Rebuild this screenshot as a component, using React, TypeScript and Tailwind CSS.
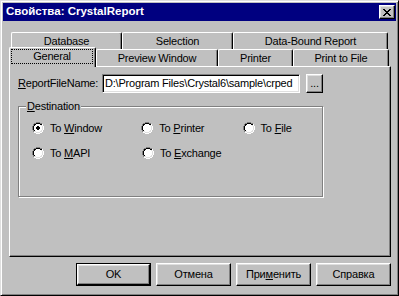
const radioOff = [
  "....gggg....",
  "..ggkkkkgg..",
  ".gkkwwwwkkw.",
  ".gkwwwwwwdw.",
  "gkwwwwwwwwdw",
  "gkwwwwwwwwdw",
  "gkwwwwwwwwdw",
  "gkwwwwwwwwdw",
  ".gkwwwwwwdw.",
  ".gddwwwwddw.",
  "..wwddddww..",
  "....wwww....",
];

const radioOn = [
  "....gggg....",
  "..ggkkkkgg..",
  ".gkkwwwwkkw.",
  ".gkwwwwwwdw.",
  "gkwwwbbwwwdw",
  "gkwwbbbbwwdw",
  "gkwwbbbbwwdw",
  "gkwwwbbwwwdw",
  ".gkwwwwwwdw.",
  ".gddwwwwddw.",
  "..wwddddww..",
  "....wwww....",
];

const closeX = [
  "bb....bb",
  ".bb..bb.",
  "..bbbb..",
  "...bb...",
  "..bbbb..",
  ".bb..bb.",
  "bb....bb",
];

const palette: Record<string, string> = {
  g: "#808080",
  k: "#000000",
  w: "#ffffff",
  d: "#dfdfdf",
  b: "#000000",
};

const Pixels = ({ rows }: { rows: string[] }) => (
  <svg width={rows[0].length} height={rows.length} shapeRendering="crispEdges" className="shrink-0 block">
    {rows.flatMap((r, y) =>
      r.split("").map((c, x) =>
        palette[c] ? <rect key={`${x}-${y}`} x={x} y={y} width={1} height={1} fill={palette[c]} /> : null
      )
    )}
  </svg>
);

const Tab = ({ label, width }: { label: string; width: string }) => (
  <div
    className={`${width} h-full flex items-center justify-center border-l border-t border-r border-l-white border-t-white border-r-black rounded-t-[2px] shadow-[inset_-1px_0_0_#808080]`}
  >
    {label}
  </div>
);

const Radio = ({ checked, children, width }: { checked?: boolean; children: React.ReactNode; width: string }) => (
  <div className={`${width} h-[12px] flex items-center gap-[6px] leading-[12px]`}>
    <Pixels rows={checked ? radioOn : radioOff} />
    <span className="whitespace-nowrap">{children}</span>
  </div>
);

const Button = ({ children, primary }: { children: React.ReactNode; primary?: boolean }) => (
  <div className={`w-[75px] h-[23px] ${primary ? "border border-black" : ""}`}>
    <div className="w-full h-full flex items-center justify-center border border-t-white border-l-white border-r-black border-b-black shadow-[inset_-1px_-1px_0_#808080,inset_1px_1px_0_#dfdfdf]">
      {children}
    </div>
  </div>
);

const App = () => {
  return (
    <div className="w-[399px] h-[296px] bg-[#c0c0c0] border border-t-[#dfdfdf] border-l-[#dfdfdf] border-r-black border-b-black p-[2px] shadow-[inset_1px_1px_0_#fff,inset_-1px_-1px_0_#808080] font-['Liberation_Sans',Arial,sans-serif] text-[11px] tracking-[-0.2px] text-black flex flex-col overflow-hidden">
      {/* title bar */}
      <div className="h-[18px] shrink-0 bg-[#000080] flex items-center justify-between pl-[3px] pr-[1px]">
        <span className="text-white font-bold text-[11.5px] tracking-normal leading-none">Свойства: CrystalReport</span>
        <div className="w-[16px] h-[14px] flex items-center justify-center border border-t-white border-l-white border-r-black border-b-black bg-[#c0c0c0] shadow-[inset_-1px_-1px_0_#808080,inset_1px_1px_0_#dfdfdf]">
          <Pixels rows={closeX} />
        </div>
      </div>

      {/* tabs */}
      <div className="mt-[11px] flex flex-col">
        <div className="ml-[8px] h-[17px] flex">
          <Tab label="Database" width="w-[111px]" />
          <Tab label="Selection" width="w-[111px]" />
          <Tab label="Data-Bound Report" width="w-[155px]" />
        </div>
        <div className="ml-[6px] h-[17px] flex items-end">
          <div className="relative z-10 w-[87px] h-[20px] -mb-px bg-[#c0c0c0] border-l border-t border-r border-l-white border-t-white border-r-black rounded-t-[2px] shadow-[inset_-1px_0_0_#808080] pl-[1px] pt-[1px] pr-[2px] pb-[3px]">
            <div className="w-full h-full border border-dotted border-black flex items-center justify-center">General</div>
          </div>
          <div className="h-full flex">
            <Tab label="Preview Window" width="w-[122px]" />
            <Tab label="Printer" width="w-[75px]" />
            <Tab label="Print to File" width="w-[96px]" />
          </div>
        </div>

        {/* panel */}
        <div className="ml-[6px] w-[382px] h-[191px] border border-t-white border-l-white border-r-black border-b-black shadow-[inset_-1px_-1px_0_#808080] pl-[8px] pt-[7px] flex flex-col">
          <div className="h-[19px] flex items-center">
            <span className="w-[84px] whitespace-nowrap">
              <span className="underline underline-offset-[1px]">R</span>eportFileName:
            </span>
            <div className="w-[198px] h-[19px] bg-white border border-t-[#808080] border-l-[#808080] border-r-white border-b-white shadow-[inset_1px_1px_0_#000,inset_-1px_-1px_0_#dfdfdf] pl-[2px] flex items-center overflow-hidden whitespace-nowrap">
              D:\Program Files\Crystal6\sample\crped
            </div>
            <div className="ml-[6px] w-[17px] h-[19px] flex items-center justify-center border border-t-white border-l-white border-r-black border-b-black shadow-[inset_-1px_-1px_0_#808080,inset_1px_1px_0_#dfdfdf] leading-none">
              ...
            </div>
          </div>

          {/* group box */}
          <div className="relative mt-[13px] w-[305px] h-[91px] border border-[#808080] shadow-[inset_1px_1px_0_#fff,1px_1px_0_#fff] pl-[13px] pt-[15px] flex flex-col gap-[13px]">
            <span className="absolute -top-[7px] left-[7px] px-[1px] bg-[#c0c0c0] leading-[13px]">
              <span className="underline underline-offset-[1px]">D</span>estination
            </span>
            <div className="flex">
              <Radio checked width="w-[110px]">
                To <span className="underline underline-offset-[1px]">W</span>indow
              </Radio>
              <Radio width="w-[102px]">
                To <span className="underline underline-offset-[1px]">P</span>rinter
              </Radio>
              <Radio width="w-[80px]">
                To <span className="underline underline-offset-[1px]">F</span>ile
              </Radio>
            </div>
            <div className="flex">
              <Radio width="w-[110px]">
                To <span className="underline underline-offset-[1px]">M</span>API
              </Radio>
              <Radio width="w-[102px]">
                To <span className="underline underline-offset-[1px]">E</span>xchange
              </Radio>
            </div>
          </div>
        </div>
      </div>

      {/* buttons */}
      <div className="mt-[6px] mr-[5px] flex justify-end gap-[5px]">
        <Button primary>OK</Button>
        <Button>Отмена</Button>
        <Button>
          При<span className="underline underline-offset-[1px]">м</span>енить
        </Button>
        <Button>Справка</Button>
      </div>
    </div>
  );
};

export default App;
